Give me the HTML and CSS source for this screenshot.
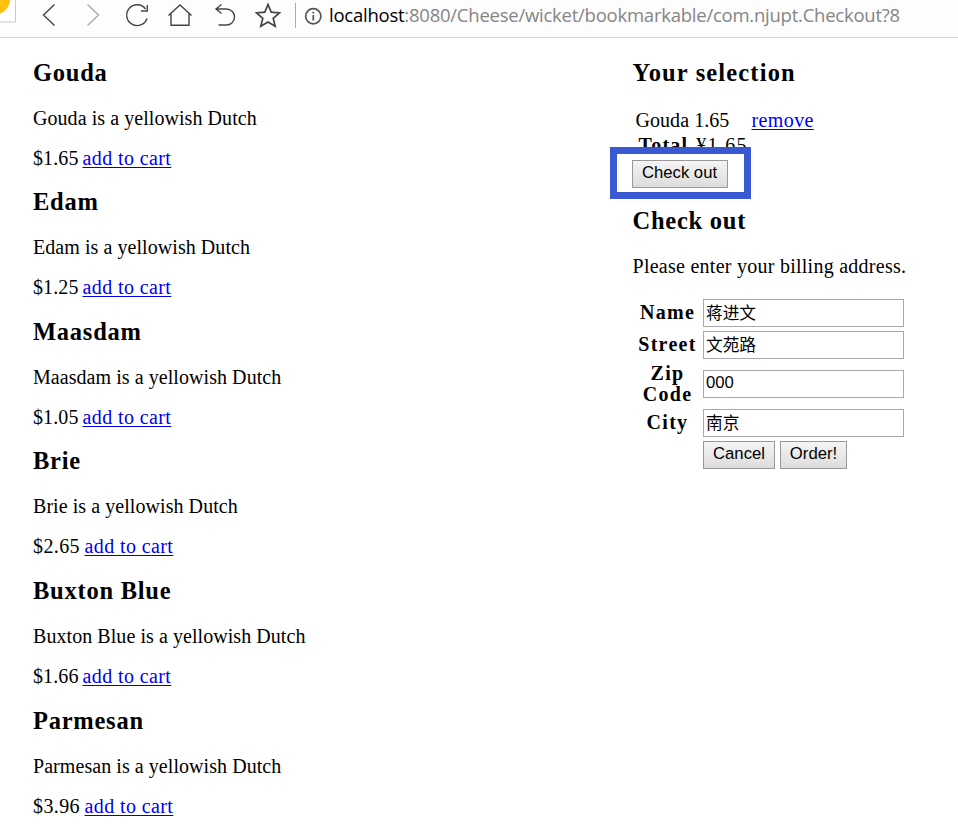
FILE: index.html
```html
<!DOCTYPE html>
<html lang="en">
<head>
<meta charset="utf-8">
<title>Cheesr - Checkout</title>
<link rel="stylesheet" href="styles.css">
</head>
<body>
<header class="toolbar">
  <svg class="icons" width="330" height="37" viewBox="0 0 330 37" fill="none" stroke="#454545" stroke-width="1.4">
    <path d="M-2 22H15.500V-2" fill="#fff" stroke="#c9c9c9" stroke-width="1"/>
    <path d="M-4 14.500C5 13 10 7 10.500-3H-4Z" fill="#ffc20e" stroke="none"/>
    <path d="M54.500 4.500L43.500 15L54.500 25.500"/>
    <path d="M87.500 4.500L98.500 15L87.500 25.500" stroke="#aaa"/>
    <path d="M147 18.500A10.400 10.400 0 1 1 145.500 9M147.300 5V11H141"/>
    <path d="M168.500 15.500L180 5L191.500 15.500M171 13.500V25.300H189V13.500"/>
    <path d="M221.500 4.500L216 9L221.500 13.500M216.500 9H226.500A8 8 0 0 1 226.500 25H218.500"/>
    <path d="M268 4.500L271.200 12.200L279.500 12.900L273.200 18.300L275.200 26.300L268 22L260.800 26.300L262.800 18.300L256.500 12.900L264.800 12.200Z" stroke-width="1.700"/>
    <path d="M295.500 3V28" stroke="#aaa" stroke-width="1"/>
    <circle cx="313.300" cy="16.300" r="7.600" stroke="#555" stroke-width="1.700"/>
    <path d="M313.300 15V20.500M313.300 11.700V13.500" stroke="#555" stroke-width="1.700"/>
  </svg>
  <div class="url"><span class="host">localhost</span>:8080/Cheese/wicket/bookmarkable/com.njupt.Checkout?8</div>
</header>
<main class="page">
  <section class="cheeses">
    <article><h3>Gouda</h3><p>Gouda is a yellowish Dutch</p><p><span class="price">$1.65</span><a href="#">add to cart</a></p></article>
    <article><h3>Edam</h3><p>Edam is a yellowish Dutch</p><p><span class="price">$1.25</span><a href="#">add to cart</a></p></article>
    <article><h3>Maasdam</h3><p>Maasdam is a yellowish Dutch</p><p><span class="price">$1.05</span><a href="#">add to cart</a></p></article>
    <article><h3>Brie</h3><p>Brie is a yellowish Dutch</p><p><span class="price wide">$2.65</span><a href="#">add to cart</a></p></article>
    <article><h3>Buxton Blue</h3><p>Buxton Blue is a yellowish Dutch</p><p><span class="price">$1.66</span><a href="#">add to cart</a></p></article>
    <article><h3>Parmesan</h3><p>Parmesan is a yellowish Dutch</p><p><span class="price wide">$3.96</span><a href="#">add to cart</a></p></article>
  </section>
  <aside class="side">
    <h3 class="selection">Your selection</h3>
    <div class="line"><span class="entry">Gouda 1.65</span><a href="#">remove</a></div>
    <div class="total"><b>Total</b><span class="amount">¥1.65</span></div>
    <div class="action"><button class="checkout">Check out</button><div class="frame"></div></div>
    <h3>Check out</h3>
    <p class="hint">Please enter your billing address.</p>
    <form class="form">
      <label for="name">Name</label><input id="name" value="蒋进文">
      <label for="street">Street</label><input id="street" value="文苑路">
      <label for="zip">Zip Code</label><input id="zip" value="000">
      <label for="city">City</label><input id="city" value="南京">
      <div class="buttons"><button type="button" class="cancel">Cancel</button><button type="button" class="order">Order!</button></div>
    </form>
  </aside>
</main>
</body>
</html>
```
FILE: styles.css
```css
* { box-sizing: border-box; }
body {
  margin: 0;
  height: 828px;
  overflow: hidden;
  background: #fff;
  color: #000;
  font: 20px/20px "Liberation Serif", serif;
  letter-spacing: 0.06px;
}
h3, p { margin: 0; white-space: nowrap; }
h3 {
  font-size: 24.5px;
  line-height: 26px;
  letter-spacing: 0.75px;
}
.selection { letter-spacing: 1.15px; }
a {
  color: #00e;
  letter-spacing: 0.4px;
  text-underline-offset: 2px;
  text-decoration-thickness: 1px;
}

.toolbar {
  display: flex;
  height: 38px;
  background: #fdfdfd;
  border-bottom: 1px solid #d5d5d5;
}
.icons { flex: none; width: 330px; margin-right: -1px; }
.url {
  color: #858585;
  font: 18.5px/30px "Open Sans", sans-serif;
  letter-spacing: -0.24px;
  white-space: nowrap;
}
.host { color: #000; }

.page { display: flex; padding: 21.6px 0 0 33px; }
.cheeses { width: 599.5px; }
.cheeses article { height: 129.6px; }
.cheeses h3 { margin-bottom: 22px; }
.cheeses p { margin-bottom: 20px; }
.price { display: inline-block; width: 49.5px; letter-spacing: 0.1px; }
.price.wide { width: 51.5px; letter-spacing: 0.4px; }

.side { width: 290px; }
.line { display: flex; margin: 24.9px 0 0 3px; }
.entry { width: 116px; }
.total { display: flex; gap: 8px; margin: 4.5px 0 0 6px; }
.total b { letter-spacing: 1.2px; }
.amount { letter-spacing: 1.3px; }
.action { position: relative; height: 28px; margin: 5px 0 20.5px -1px; }
.frame {
  position: absolute;
  left: -22px;
  top: -13px;
  width: 141px;
  height: 52px;
  border: 7px solid #3859d2;
}
button {
  height: 28px;
  padding: 0 0 1px;
  border: 1px solid #999;
  background: linear-gradient(#f5f5f5, #dcdcdc);
  color: #000;
  font: 16.7px "Liberation Sans", sans-serif;
}
.checkout { width: 96px; }
.cancel { width: 72px; }
.order { width: 67px; }
.hint { margin-top: 22px; letter-spacing: 0.26px; }
.form {
  display: grid;
  grid-template-columns: 66px 201px;
  grid-template-rows: 28px 28px 42px 28px 28px;
  gap: 4px;
  align-items: center;
  margin: 22.5px 0 0 0.5px;
}
label {
  font-weight: bold;
  line-height: 21px;
  letter-spacing: 1.3px;
  text-align: center;
  padding: 0 0 0 3px;
}
input {
  width: 201px;
  height: 28px;
  padding: 0 2px 1px;
  border: 1px solid #a9a9a9;
  font: 16.7px "Liberation Sans", "Noto Sans CJK SC", sans-serif;
}
.buttons { grid-column: 2; display: flex; gap: 5px; }
```
